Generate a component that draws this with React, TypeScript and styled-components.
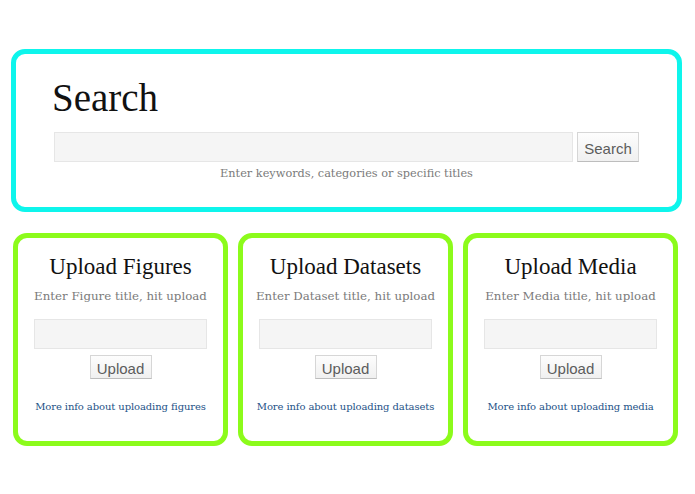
import React from 'react';
import styled, { createGlobalStyle } from 'styled-components';

const GlobalStyle = createGlobalStyle`
  html, body {
    margin: 0;
    padding: 0;
    background: #ffffff;
  }
`;

const uploads = [
  { title: 'Upload Figures', kind: 'Figure', link: 'figures' },
  { title: 'Upload Datasets', kind: 'Dataset', link: 'datasets' },
  { title: 'Upload Media', kind: 'Media', link: 'media' },
];

function App(): JSX.Element {
  return (
    <Page>
      <GlobalStyle />
      <SearchPanel>
        <SearchTitle>Search</SearchTitle>
        <SearchRow>
          <SearchInput type="text" />
          <GreyButton>Search</GreyButton>
        </SearchRow>
        <Hint>Enter keywords, categories or specific titles</Hint>
      </SearchPanel>
      <CardRow>
        {uploads.map((u) => (
          <UploadCard key={u.kind}>
            <CardTitle>{u.title}</CardTitle>
            <Hint>Enter {u.kind} title, hit upload</Hint>
            <CardInput type="text" />
            <GreyButton small>Upload</GreyButton>
            <InfoLink href="#">More info about uploading {u.link}</InfoLink>
          </UploadCard>
        ))}
      </CardRow>
    </Page>
  );
}

const Page = styled.div`
  width: 695px;
  height: 494px;
  box-sizing: border-box;
  padding: 49px 13px 0 11px;
`;

const SearchPanel = styled.div`
  box-sizing: border-box;
  width: 671px;
  height: 163px;
  border: 5px solid #0ef5ec;
  border-radius: 14px;
  padding: 19px 38px 0 38px;
  display: flex;
  flex-direction: column;
`;

const SearchTitle = styled.h1`
  margin: 0 0 0 -2px;
  font-family: 'Liberation Serif', serif;
  font-weight: normal;
  font-size: 39px;
  line-height: 50px;
  color: #111;
`;

const SearchRow = styled.div`
  display: flex;
  gap: 4px;
  margin-top: 9px;
`;

const SearchInput = styled.input`
  flex: 1;
  height: 30px;
  box-sizing: border-box;
  background: #f5f5f5;
  border: 1px solid #e6e6e6;
  outline: none;
`;

const GreyButton = styled.button<{ small?: boolean }>`
  box-sizing: border-box;
  width: 62px;
  height: ${(p) => (p.small ? '24px' : '30px')};
  padding: 2px 0 0 0;
  background: linear-gradient(#fdfdfd, #f0f0f0);
  border: 1px solid #d6d6d6;
  border-bottom-color: #bdbdbd;
  font-family: 'Liberation Sans', Arial, sans-serif;
  font-size: 15px;
  color: #5c5c5c;
`;

const Hint = styled.p`
  margin: 5px 0 0 0;
  text-align: center;
  font-family: 'DejaVu Serif', serif;
  font-size: 11.3px;
  line-height: 14px;
  color: #7a7a7a;
`;

const CardRow = styled.div`
  display: flex;
  gap: 10px;
  margin: 21px 0 0 2px;
`;

const UploadCard = styled.div`
  box-sizing: border-box;
  width: 215px;
  height: 213px;
  border: 5px solid #8cfb1b;
  border-radius: 14px;
  padding: 16px 14px 0 14px;
  display: flex;
  flex-direction: column;
  align-items: center;

  ${Hint} {
    margin-top: 9px;
    font-size: 11.8px;
    white-space: nowrap;
  }
`;

const CardTitle = styled.h2`
  margin: 0;
  font-family: 'Liberation Serif', serif;
  font-weight: normal;
  font-size: 23px;
  line-height: 26px;
  color: #111;
`;

const CardInput = styled.input`
  width: 173px;
  height: 30px;
  box-sizing: border-box;
  margin: 16px 0 6px 0;
  background: #f5f5f5;
  border: 1px solid #e6e6e6;
  outline: none;
`;

const InfoLink = styled.a`
  margin-top: 22px;
  font-family: 'DejaVu Serif', serif;
  font-size: 10px;
  color: #245287;
  text-decoration: none;
  letter-spacing: -0.1px;
  white-space: nowrap;
`;

export default App;
